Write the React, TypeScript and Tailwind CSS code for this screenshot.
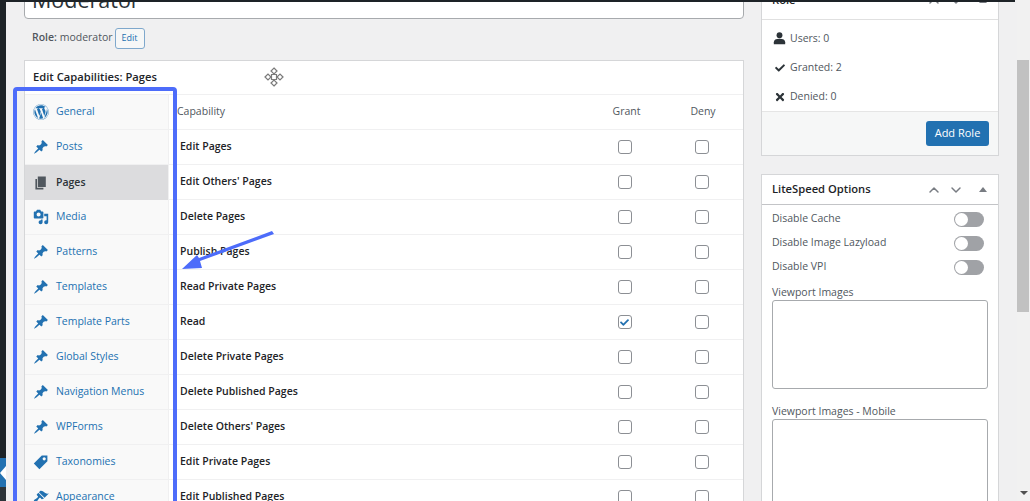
import React from 'react';
import { FaWordpress, FaCheck, FaTimes } from 'react-icons/fa';
import { ChevronUp, ChevronDown } from 'lucide-react';

const PIN = 'M10.44 3.02l1.82-1.82 6.36 6.35-1.83 1.82c-1.05-.68-2.48-.57-3.41.36l-.75.75c-.92.93-1.04 2.35-.35 3.41l-1.83 1.82-2.41-2.41-2.8 2.79c-.42.42-3.38 2.71-3.8 2.29s1.86-3.39 2.28-3.81l2.79-2.79L4.1 9.36l1.83-1.82c1.05.69 2.48.57 3.4-.36l.75-.75c.93-.92 1.05-2.35.36-3.41z';
const PAGE = 'M6 15V2h10v13H6zm-1 1h8v2H3V5h2v11z';
const MEDIA = 'M13 11V4c0-.55-.45-1-1-1h-1.67L9 1H5L3.67 3H2c-.55 0-1 .45-1 1v7c0 .55.45 1 1 1h10c.55 0 1-.45 1-1zM7 4.5c1.38 0 2.5 1.12 2.5 2.5S8.38 9.5 7 9.5 4.5 8.38 4.5 7 5.62 4.5 7 4.5zM14 6h5v10.5c0 1.38-1.12 2.5-2.5 2.5S14 17.88 14 16.5s1.12-2.5 2.5-2.5c.17 0 .34.02.5.05V9h-3V6zm-4 8.05V13h2v3.5c0 1.38-1.12 2.5-2.5 2.5S7 17.88 7 16.5 8.12 14 9.5 14c.17 0 .34.02.5.05z';
const TAG = 'M11 2h7v7L8 19l-7-7zm3 6c1.1 0 2-.9 2-2s-.9-2-2-2-2 .9-2 2 .9 2 2 2z';
const BRUSH = 'M14.48 11.06L7.41 3.99l1.5-1.5c.5-.56 2.3-.47 3.51.32 1.21.8 1.43 1.28 2.91 2.1 1.18.64 2.45 1.26 4.45.85zm-.71.71L6.7 4.7 4.93 6.47c-.39.39-.39 1.02 0 1.41l1.06 1.06c.39.39.39 1.03 0 1.42-.6.6-1.43 1.11-2.21 1.69-.35.26-.7.53-1.01.84C1.43 13.23.4 14.98 1.4 15.98c1 1 2.76 0 4.09-1.4.31-.31.58-.66.85-1.01.57-.78 1.08-1.61 1.69-2.21.39-.39 1.02-.39 1.41 0l1.06 1.06c.39.39 1.02.39 1.41 0z';

const Dash = ({ d, className }: { d: string; className?: string }) => (
  <svg viewBox="0 0 20 20" fill="currentColor" className={className}>
    <path d={d} />
  </svg>
);

const tabs = [
  { label: 'General', icon: 'wp' },
  { label: 'Posts', icon: PIN },
  { label: 'Pages', icon: PAGE, active: true },
  { label: 'Media', icon: MEDIA },
  { label: 'Patterns', icon: PIN },
  { label: 'Templates', icon: PIN },
  { label: 'Template Parts', icon: PIN },
  { label: 'Global Styles', icon: PIN },
  { label: 'Navigation Menus', icon: PIN },
  { label: 'WPForms', icon: PIN },
  { label: 'Taxonomies', icon: TAG },
  { label: 'Appearance', icon: BRUSH },
];

const caps = [
  'Edit Pages',
  "Edit Others' Pages",
  'Delete Pages',
  'Publish Pages',
  'Read Private Pages',
  'Read',
  'Delete Private Pages',
  'Delete Published Pages',
  "Delete Others' Pages",
  'Edit Private Pages',
  'Edit Published Pages',
];

const Box = ({ checked }: { checked?: boolean }) => (
  <span className="w-[14px] h-[14px] rounded-[3px] border border-[#8c8f94] bg-white flex items-center justify-center">
    {checked && <FaCheck className="w-[9px] h-[9px] text-[#2271b1]" />}
  </span>
);

const Toggle = () => (
  <span className="w-[30px] h-[15px] rounded-full bg-[#a0a2a6] flex items-center pl-[1px]">
    <span className="w-[13px] h-[13px] rounded-full bg-white" />
  </span>
);

const PanelControls = () => (
  <div className="flex items-center text-[#787c82]">
    <ChevronUp className="w-[16px] h-[16px]" strokeWidth={2.2} />
    <ChevronDown className="w-[16px] h-[16px] ml-[6px]" strokeWidth={2.2} />
    <span className="ml-[15px] mr-[1px] w-0 h-0 border-x-[4px] border-x-transparent border-b-[5px] border-b-[#787c82]" />
  </div>
);

export default function App() {
  return (
    <div className="relative w-[1030px] h-[501px] overflow-hidden flex bg-[#f0f0f1] font-['Open_Sans',sans-serif] text-[10.5px] text-[#50575e]">
      {/* admin menu edge */}
      <div className="w-[6px] shrink-0 bg-[#1d2327] flex flex-col">
        <div className="h-[458px]" />
        <div className="h-[29px] bg-[#2271b1] flex items-center">
          <span className="w-0 h-0 border-y-[7px] border-y-transparent border-r-[6px] border-r-white" />
        </div>
        <div className="flex-1 bg-[#2c3338]" />
      </div>

      {/* page body */}
      <div className="flex-1 pl-[18px] flex gap-[17px] items-start -mt-[19px]">
        <div className="w-[720px] shrink-0">
          <div className="h-[38px] bg-white border border-[#a7aaad] rounded-[4px] pl-[7px] flex items-center text-[21.5px] leading-none text-[#2c3338]">
            Moderator
          </div>
          <div className="mt-[8px] h-[22px] pl-[8px] flex items-center gap-[2px]">
            <span><span className="font-semibold">Role:</span> moderator</span>
            <span className="h-[21px] w-[30px] rounded-[3px] border border-[#7fa8cc] bg-[#f6f7f7] text-[#2271b1] text-[9px] flex items-center justify-center">Edit</span>
          </div>

          <div className="mt-[11px] bg-white border border-[#d5d6d8]">
            <div className="h-[34px] pl-[8px] flex items-center font-semibold text-[11.2px] text-[#1d2327] border-b border-[#f0f0f1]">
              Edit Capabilities: Pages
            </div>
            <div className="flex">
              <div className="w-[144px] shrink-0 bg-[#f9f9f9] border-r border-[#f0f0f1]">
                {tabs.map((t) => (
                  <div
                    key={t.label}
                    className={t.active
                      ? 'h-[35px] pl-[8px] flex items-center gap-[7px] bg-[#dcdcde] text-[#2c3338] font-semibold'
                      : 'h-[35px] pl-[8px] flex items-center gap-[7px] border-b border-[#f0f0f1] text-[#2271b1]'}
                  >
                    {t.icon === 'wp'
                      ? <FaWordpress className="w-[16px] h-[16px] shrink-0" />
                      : <Dash d={t.icon} className={t.active ? 'w-[16px] h-[16px] shrink-0 text-[#50575e]' : 'w-[16px] h-[16px] shrink-0'} />}
                    <span>{t.label}</span>
                  </div>
                ))}
              </div>
              <div className="flex-1">
                <div className="h-[35px] flex items-center border-b border-[#f0f0f1]">
                  <span className="flex-1 pl-[8px]">Capability</span>
                  <span className="w-[77px] pl-[4px] text-center">Grant</span>
                  <span className="w-[77px] mr-[3px] pl-[3px] text-center">Deny</span>
                </div>
                {caps.map((c) => (
                  <div key={c} className="h-[35px] flex items-center border-b border-[#f0f0f1]">
                    <span className="flex-1 pl-[11px] font-semibold text-[#1d2327]">{c}</span>
                    <span className="w-[77px] flex justify-center"><Box checked={c === 'Read'} /></span>
                    <span className="w-[77px] mr-[3px] flex justify-center"><Box /></span>
                  </div>
                ))}
              </div>
            </div>
          </div>
        </div>

        {/* side panels */}
        <div className="w-[238px] shrink-0">
          <div className="bg-white border border-[#d5d6d8]">
            <div className="h-[38px] px-[10px] flex items-center justify-between border-b border-[#e0e0e0] font-semibold text-[11.2px] text-[#1d2327]">
              Role
              <PanelControls />
            </div>
            <div className="h-[91px] pl-[11px] pt-[4px] flex flex-col justify-center gap-[13px]">
              <div className="h-[16px] flex items-center gap-[4px]">
                <svg viewBox="0 0 16 16" fill="#2c3338" className="w-[13px] h-[13px]">
                  <circle cx="8" cy="4" r="3.6" />
                  <path d="M1 15v-2.5C1 9.8 3.5 8.4 8 8.4s7 1.4 7 4.1V15z" />
                </svg>
                Users: 0
              </div>
              <div className="h-[16px] flex items-center gap-[5px]">
                <FaCheck className="w-[10px] h-[10px] ml-[2px] text-[#2c3338]" />
                Granted: 2
              </div>
              <div className="h-[16px] flex items-center gap-[4px]">
                <FaTimes className="w-[12px] h-[12px] ml-[1px] text-[#2c3338]" />
                Denied: 0
              </div>
            </div>
            <div className="h-[44px] bg-[#f6f7f7] border-t border-[#e5e5e5] flex items-center justify-end pr-[9px]">
              <span className="w-[63px] h-[25px] rounded-[3px] bg-[#2271b1] text-white text-[11px] flex items-center justify-center">Add Role</span>
            </div>
          </div>

          <div className="mt-[18px] bg-white border border-[#d5d6d8]">
            <div className="h-[30px] px-[10px] flex items-center justify-between border-b border-[#c3c4c7] font-semibold text-[11.2px] text-[#1d2327]">
              LiteSpeed Options
              <PanelControls />
            </div>
            <div className="px-[10px] pt-[2px] pb-[40px]">
              {['Disable Cache', 'Disable Image Lazyload', 'Disable VPI'].map((o) => (
                <div key={o} className="h-[24px] flex items-center justify-between pr-[4px]">
                  {o}
                  <Toggle />
                </div>
              ))}
              <div className="mt-[6px] h-[15px] flex items-center">Viewport Images</div>
              <div className="h-[89px] rounded-[3px] border border-[#a7aaad] bg-white" />
              <div className="mt-[15px] h-[15px] flex items-center">Viewport Images - Mobile</div>
              <div className="h-[90px] rounded-[3px] border border-[#a7aaad] bg-white" />
            </div>
          </div>
        </div>
      </div>

      {/* browser scrollbar */}
      <div className="w-[13px] shrink-0 ml-auto bg-[#f1f1f1] flex flex-col">
        <div className="h-[60px]" />
        <div className="h-[252px] mr-[1px] bg-[#c1c1c1]" />
        <div className="flex-1 flex items-end justify-center pb-[6px]">
          <span className="w-0 h-0 border-x-[4px] border-x-transparent border-t-[4px] border-t-[#505050]" />
        </div>
      </div>

      {/* window top edge */}
      <div className="absolute top-0 left-0 w-[1015px] h-[2px] bg-[#1d2327]" />

      {/* annotation overlay */}
      <div className="absolute left-[13px] top-[87px] w-[164px] h-[430px] border-[4px] border-[#4d6cfa] rounded-[4px]" />
      <svg viewBox="0 0 100 45" className="absolute left-[178px] top-[228px] w-[100px] h-[45px]">
        <path d="M96 6 L22 33 L24 40 L4 41 L19 27 L21 30 L94 3 Z" fill="#4d6cfa" />
      </svg>
      <svg viewBox="0 0 20 20" className="absolute left-[264px] top-[67px] w-[20px] h-[20px]" fill="white" stroke="#7a7a7a" strokeWidth="1.2">
        <path d="M10 1l3 3-3 3-3-3z" />
        <path d="M10 19l3-3-3-3-3 3z" />
        <path d="M1 10l3-3 3 3-3 3z" />
        <path d="M19 10l-3-3-3 3 3 3z" />
        <path d="M7.5 7.5h5v5h-5z" />
      </svg>
    </div>
  );
}
